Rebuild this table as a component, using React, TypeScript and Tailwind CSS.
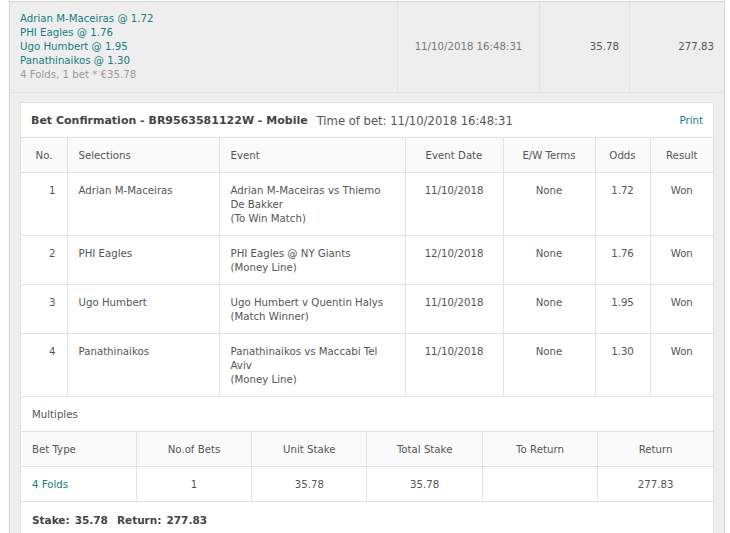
const font = { fontFamily: '"DejaVu Sans", Verdana, sans-serif' };

const selections = [
  {
    no: 1,
    sel: "Adrian M-Maceiras",
    event: ["Adrian M-Maceiras vs Thiemo", "De Bakker", "(To Win Match)"],
    date: "11/10/2018",
    odds: "1.72",
  },
  {
    no: 2,
    sel: "PHI Eagles",
    event: ["PHI Eagles @ NY Giants", "(Money Line)"],
    date: "12/10/2018",
    odds: "1.76",
  },
  {
    no: 3,
    sel: "Ugo Humbert",
    event: ["Ugo Humbert v Quentin Halys", "(Match Winner)"],
    date: "11/10/2018",
    odds: "1.95",
  },
  {
    no: 4,
    sel: "Panathinaikos",
    event: ["Panathinaikos vs Maccabi Tel", "Aviv", "(Money Line)"],
    date: "11/10/2018",
    odds: "1.30",
  },
];

const cell = "border-l border-[#e3e3e3] first:border-l-0 pt-[11px] pb-[9px] px-[11px] align-top";

export default function App() {
  return (
    <div className="bg-white h-[533px] overflow-hidden text-[10.2px] leading-[14px] text-[#555]" style={font}>
      <div className="mt-px ml-[9px] mr-[5px] border border-[#d4d4d4] bg-[#eeeeee]">
        {/* ── summary row ── */}
        <div className="flex h-[91px] border-b border-[#e2e2e2]">
          <div className="w-[387px] pt-[10px] px-[10px] text-[#117f80]">
            <div>Adrian M-Maceiras @ 1.72</div>
            <div>PHI Eagles @ 1.76</div>
            <div>Ugo Humbert @ 1.95</div>
            <div>Panathinaikos @ 1.30</div>
            <div className="text-[#999]">4 Folds, 1 bet * €35.78</div>
          </div>
          <div className="w-[142px] border-l border-[#e2e2e2] flex items-center justify-center text-[#777]">
            11/10/2018 16:48:31
          </div>
          <div className="w-[90px] border-l border-[#e2e2e2] flex items-center justify-end pr-[10px]">
            35.78
          </div>
          <div className="flex-1 border-l border-[#e2e2e2] flex items-center justify-end pr-[10px]">
            277.83
          </div>
        </div>

        {/* ── confirmation panel ── */}
        <div className="pt-[9px] pl-[10px] pr-[10px]">
          <div className="bg-white border border-[#e0e0e0] border-b-0">
            <div className="flex items-center h-[34px] px-[10px] pt-px">
              <span className="font-bold text-[11px] text-[#444]">Bet Confirmation - BR9563581122W - Mobile</span>
              <span className="ml-[9px] text-[11.6px] text-[#555]">Time of bet: 11/10/2018 16:48:31</span>
              <span className="ml-auto text-[#117f80]">Print</span>
            </div>

            <table className="w-full border-collapse table-fixed">
              <colgroup>
                <col className="w-[46px]" />
                <col className="w-[152px]" />
                <col className="w-[186px]" />
                <col className="w-[98px]" />
                <col className="w-[92px]" />
                <col className="w-[55px]" />
                <col />
              </colgroup>
              <thead>
                <tr className="bg-[#fafafa] border-t border-[#e0e0e0]">
                  <th className={`${cell} font-normal text-right pr-[14px]`}>No.</th>
                  <th className={`${cell} font-normal text-left`}>Selections</th>
                  <th className={`${cell} font-normal text-left`}>Event</th>
                  <th className={`${cell} font-normal text-center`}>Event Date</th>
                  <th className={`${cell} font-normal text-center`}>E/W Terms</th>
                  <th className={`${cell} font-normal text-center`}>Odds</th>
                  <th className={`${cell} font-normal text-center`}>Result</th>
                </tr>
              </thead>
              <tbody>
                {selections.map((s) => (
                  <tr key={s.no} className="border-t border-[#e3e3e3]">
                    <td className={`${cell} text-right pr-[11px]`}>{s.no}</td>
                    <td className={cell}>{s.sel}</td>
                    <td className={cell}>
                      {s.event.map((l) => (
                        <div key={l} className="whitespace-nowrap">{l}</div>
                      ))}
                    </td>
                    <td className={`${cell} text-center`}>{s.date}</td>
                    <td className={`${cell} text-center`}>None</td>
                    <td className={`${cell} text-center`}>{s.odds}</td>
                    <td className={`${cell} text-center`}>Won</td>
                  </tr>
                ))}
              </tbody>
            </table>

            <div className="border-t border-[#e3e3e3] h-[35px] flex items-center px-[11px] pt-px">Multiples</div>

            <table className="w-full border-collapse table-fixed">
              <thead>
                <tr className="bg-[#fafafa] border-t border-[#e0e0e0]">
                  <th className={`${cell} font-normal text-left`}>Bet Type</th>
                  <th className={`${cell} font-normal text-center`}>No.of Bets</th>
                  <th className={`${cell} font-normal text-center`}>Unit Stake</th>
                  <th className={`${cell} font-normal text-center`}>Total Stake</th>
                  <th className={`${cell} font-normal text-center`}>To Return</th>
                  <th className={`${cell} font-normal text-center`}>Return</th>
                </tr>
              </thead>
              <tbody>
                <tr className="border-t border-b border-[#e3e3e3]">
                  <td className={`${cell} text-[#117f80]`}>4 Folds</td>
                  <td className={`${cell} text-center`}>1</td>
                  <td className={`${cell} text-center`}>35.78</td>
                  <td className={`${cell} text-center`}>35.78</td>
                  <td className={`${cell} text-center`}></td>
                  <td className={`${cell} text-center`}>277.83</td>
                </tr>
              </tbody>
            </table>

            <div className="h-[36px] flex items-center px-[11px] font-bold text-[10.5px] text-[#444]">
              <span>Stake:</span>
              <span className="ml-[5px]">35.78</span>
              <span className="ml-[9px]">Return:</span>
              <span className="ml-[5px]">277.83</span>
            </div>
            <div className="h-[40px]" />
          </div>
        </div>
      </div>
    </div>
  );
}
